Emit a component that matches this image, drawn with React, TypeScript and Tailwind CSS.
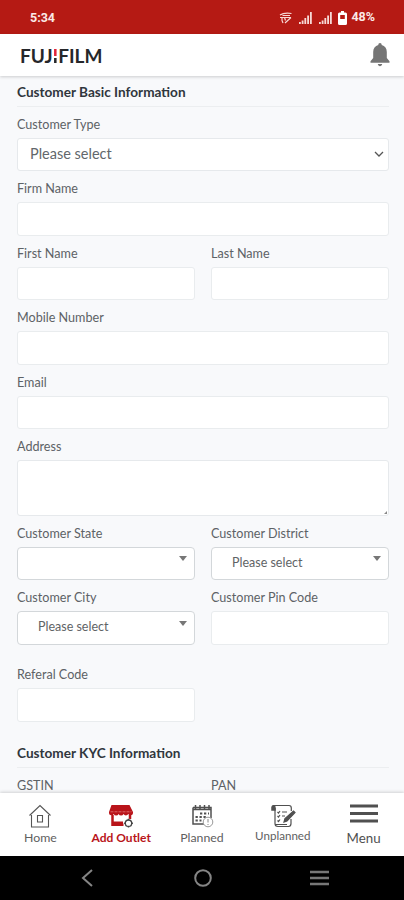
import type { ReactNode } from "react";

const labelClass = "h-[31px] pt-[9px] text-[12.6px] leading-[17px] text-[#5d6266]";
const boxClass =
  "block h-[33.5px] w-full rounded-[3px] border border-[#e9ecee] bg-white outline-none";

function Field({ label, children }: { label: string; children?: ReactNode }) {
  return (
    <label className="block min-w-0">
      <div className={labelClass}>{label}</div>
      {children ?? <input type="text" className={boxClass} />}
    </label>
  );
}

function Row({ children }: { children: ReactNode }) {
  return <div className="grid grid-cols-2 gap-4">{children}</div>;
}

function SearchSelect({ value }: { value?: string }) {
  return (
    <button
      type="button"
      className="flex h-[33.5px] w-full items-center justify-between rounded-[4px] border border-[#d3d7da] bg-white pr-[7px] pl-[20px] text-[12.5px] text-[#5f6366]"
    >
      <span>{value}</span>
      <svg viewBox="0 0 8 5" className="mb-[9px] h-[5px] w-2 fill-[#777]">
        <path d="M0 0h8L4 5z" />
      </svg>
    </button>
  );
}

function SectionTitle({ children }: { children: ReactNode }) {
  return (
    <h2 className="h-[30.5px] border-b border-[#eceef0] pt-[7px] text-[13.6px] leading-[18px] font-bold text-[#30363d]">
      {children}
    </h2>
  );
}

function StatusBar() {
  return (
    <div className="flex h-[34px] shrink-0 items-center bg-[#b51a14] pr-[29px] pl-[30px] font-[Roboto] text-[12.5px] font-bold text-[#fbe9e7]">
      <span className="mt-[2px]">5:34</span>
      <div className="mt-px ml-auto flex items-center">
        <svg viewBox="0 0 13 12" className="h-3 w-[13px]" fill="none" stroke="#f7d9d6">
          <path d="M1 3C4 1 9 1 12.500 1.500M1 5.500h11M3.500 3.500h7.500M3 5.500v3l1 2.500M6 11l6-5.500M5.500 5.500l1 3" strokeWidth="1.200" />
        </svg>
        {["a", "b"].map((k) => (
          <svg
            key={k}
            viewBox="0 0 13 12"
            className="ml-[7px] h-3 w-[13px]"
            fill="#f7d9d6"
          >
            <path d="M0 10h1.800v2H0zM2.700 8.500h1.800V12H2.700zM5.400 6h1.800v6H5.400zM8.200 3.500H10V12H8.200zM11 0h1.800v12H11z" />
          </svg>
        ))}
        <svg viewBox="0 0 9 14" className="ml-[6px] h-[14px] w-[9px]">
          <path fill="#fff" d="M3 0h3v1.500h1.500Q9 1.500 9 3v9.500Q9 14 7.500 14h-6Q0 14 0 12.500V3q0-1.500 1.500-1.500H3z" />
          <path fill="#b51a14" d="M2.200 4h4.600v4H2.200z" />
        </svg>
        <span className="ml-[4px]">48%</span>
      </div>
    </div>
  );
}

function Header() {
  return (
    <header className="z-10 flex h-[42px] shrink-0 items-center justify-between bg-white pr-[14px] pl-[20px] shadow-[0_1px_3px_rgba(0,0,0,0.18)]">
      <div className="text-[19px] leading-none font-bold text-[#25272a]">
        FUJ
        <span className="bg-[linear-gradient(#e0243a_54%,#fff_54%,#fff_60%,#25272a_60%)] bg-clip-text text-transparent">
          I
        </span>
        FILM
      </div>
      <svg viewBox="0 0 20 24" className="h-6 w-5 fill-[#757575]">
        <path d="M10 0C8.900 0 8.300.8 8.300 2 5 2.800 3.200 5.400 3.200 9v6L.5 18.200v1.500h19v-1.500L16.800 15V9c0-3.600-1.800-6.200-5.100-7C11.700.8 11.100 0 10 0zM7.800 21c.2 1.400 1.100 2.200 2.200 2.200s2-.8 2.200-2.200z" />
      </svg>
    </header>
  );
}

function HomeIcon() {
  return (
    <svg viewBox="0 0 24 24" className="h-6 w-6" fill="none" stroke="#555" strokeWidth="1.100">
      <path d="M1.500 11.500 12 1.500l10.500 10M3.500 11v12h17V11M9.500 11.500h5v6.500h-5z" />
    </svg>
  );
}

function OutletIcon() {
  return (
    <svg viewBox="0 0 26 24" className="h-6 w-[26px]">
      <path
        fill="#b9141a"
        d="M3.500 1h18L25 8v1.200a2.500 2.500 0 0 1-4.700.8 2.700 2.700 0 0 1-4.800 0 2.700 2.700 0 0 1-4.900 0 2.700 2.700 0 0 1-4.900 0A2.500 2.500 0 0 1 1 9.200V8z"
      />
      <path d="M2.500 7.800h21" stroke="#e88" strokeWidth=".7" strokeDasharray="3 1" />
      <path fill="none" stroke="#b9141a" strokeWidth="2.500" d="M4.500 11v9.800h11M22 11v4" />
      <path fill="#b9141a" d="M4 17.500h11V22H4z" />
      <circle cx="20.500" cy="19.200" r="4.500" fill="#fff" />
      <circle cx="20.500" cy="19.200" r="3.200" fill="none" stroke="#444" strokeWidth="1.300" />
      <path d="M20.500 14.800v1.500m0 5.800v1.500m-4.400-4.400h1.500m5.800 0h1.500" stroke="#444" strokeWidth="1.500" />
    </svg>
  );
}

function PlannedIcon() {
  return (
    <svg viewBox="0 0 24 24" className="h-6 w-6" fill="none" stroke="#505050">
      <path d="M3 3.500h18V14M3 3.500V20h11M3 5.500h18" strokeWidth="1.500" />
      <path d="M5.500 1v4M10 1v4M14.500 1v4M19 1v4" strokeWidth="1.500" />
      <path
        d="M10 9.500h9M5.500 13h11M5.500 16.500h6"
        strokeWidth="2.200"
        strokeDasharray="2.300 1.700"
      />
      <circle cx="18" cy="18" r="4.800" fill="#fff" stroke="#999" />
      <path d="M18 15v3.500M18 20v1" stroke="#888" />
    </svg>
  );
}

function UnplannedIcon() {
  return (
    <svg viewBox="0 0 26 24" className="h-6 w-[26px]" fill="none" stroke="#505050" strokeWidth="1.200">
      <path d="M2.500 1.500H19q2.300 0 2.300 2.500v3M5 4v15.500Q5 22.500 8 22.500h10.500q2.500 0 2.500-3V15M5 20.500h12" />
      <path d="M5 6H2V3.200Q2 2 3.500 2 5 2 5 4z" fill="#505050" strokeWidth="1.500" />
      <path d="m7.500 8 1 1 1.500-2M7.500 12l1 1 1.500-2M7.500 16.500l1 1 1.500-2M12 8h5M12 12h3" />
      <path d="m14 18 1-3.500 8.500-7.500 1.500 1.500-8 8.500z" fill="#505050" />
    </svg>
  );
}

function MenuIcon() {
  return (
    <svg viewBox="0 0 28 20" className="h-5 w-7" stroke="#505050" strokeWidth="3">
      <path d="M0 2h28M0 9.500h28M0 17h28" />
    </svg>
  );
}

const tabs = [
  { label: "Home", icon: <HomeIcon />, text: "mt-[1px] text-[12.3px] text-[#606060]" },
  { label: "Add Outlet", icon: <OutletIcon />, text: "mt-[1px] text-[12px] font-bold text-[#b9141a]" },
  { label: "Planned", icon: <PlannedIcon />, text: "mt-[1px] text-[12.3px] text-[#606060]" },
  { label: "Unplanned", icon: <UnplannedIcon />, text: "-mt-[1px] text-[11.6px] text-[#606060]" },
  { label: "Menu", icon: <MenuIcon />, text: "mt-[5px] text-[13.3px] text-[#505050]" },
];

function TabBar() {
  return (
    <nav className="z-10 grid h-[63px] shrink-0 grid-cols-5 bg-white pt-[11px] shadow-[0_-1px_3px_rgba(0,0,0,0.16)]">
      {tabs.map((tab) => (
        <a key={tab.label} href="#" className="flex flex-col items-center">
          {tab.icon}
          <span className={`${tab.text} leading-[18px] whitespace-nowrap`}>{tab.label}</span>
        </a>
      ))}
    </nav>
  );
}

function SystemNav() {
  return (
    <div className="grid h-[44px] shrink-0 grid-cols-[174px_58px_172px] items-center justify-items-center bg-black">
      <svg viewBox="0 0 12 18" className="h-[18px] w-3" fill="none" stroke="#858585" strokeWidth="2">
        <path d="M11 1 2 9l9 8" />
      </svg>
      <svg viewBox="0 0 18 18" className="h-[18px] w-[18px]" fill="none" stroke="#858585" strokeWidth="2">
        <circle cx="9" cy="9" r="7.800" />
      </svg>
      <svg viewBox="0 0 19 16" className="ml-[2px] h-4 w-[19px]" stroke="#777" strokeWidth="2.600">
        <path d="M0 2h19M0 8h19M0 14h19" />
      </svg>
    </div>
  );
}

export default function App() {
  return (
    <div className="flex h-[900px] w-[404px] flex-col overflow-hidden bg-[#f8f9fb] font-[Lato,sans-serif]">
      <StatusBar />
      <Header />
      <main className="min-h-0 flex-1 overflow-hidden pr-[15px] pl-[17px]">
        <SectionTitle>Customer Basic Information</SectionTitle>
        <Field label="Customer Type">
          <div className="flex h-[33.5px] items-center justify-between rounded-[3px] border border-[#e6e9ec] bg-white pr-1 pl-3 text-[14.5px] text-[#62676b]">
            <span>Please select</span>
            <svg viewBox="0 0 10 6" className="h-1.5 w-2.5" fill="none" stroke="#555" strokeWidth="1.300">
              <path d="m1 1 4 4 4-4" />
            </svg>
          </div>
        </Field>
        <Field label="Firm Name" />
        <Row>
          <Field label="First Name" />
          <Field label="Last Name" />
        </Row>
        <Field label="Mobile Number" />
        <Field label="Email" />
        <Field label="Address">
          <div className="relative">
            <textarea className="block h-[55.5px] w-full resize-none rounded-[3px] border border-[#e6e9ec] bg-white outline-none" />
            <svg viewBox="0 0 4 4" className="absolute right-[2px] bottom-[2px] h-[3px] w-[3px] fill-[#888]">
              <path d="M4 0v4H0z" />
            </svg>
          </div>
        </Field>
        <Row>
          <Field label="Customer State">
            <SearchSelect />
          </Field>
          <Field label="Customer District">
            <SearchSelect value="Please select" />
          </Field>
        </Row>
        <Row>
          <Field label="Customer City">
            <SearchSelect value="Please select" />
          </Field>
          <Field label="Customer Pin Code" />
        </Row>
        <div className="mt-[12.5px] mb-[15.5px]">
          <Row>
            <Field label="Referal Code" />
          </Row>
        </div>
        <SectionTitle>Customer KYC Information</SectionTitle>
        <Row>
          <Field label="GSTIN" />
          <Field label="PAN" />
        </Row>
      </main>
      <TabBar />
      <SystemNav />
    </div>
  );
}
